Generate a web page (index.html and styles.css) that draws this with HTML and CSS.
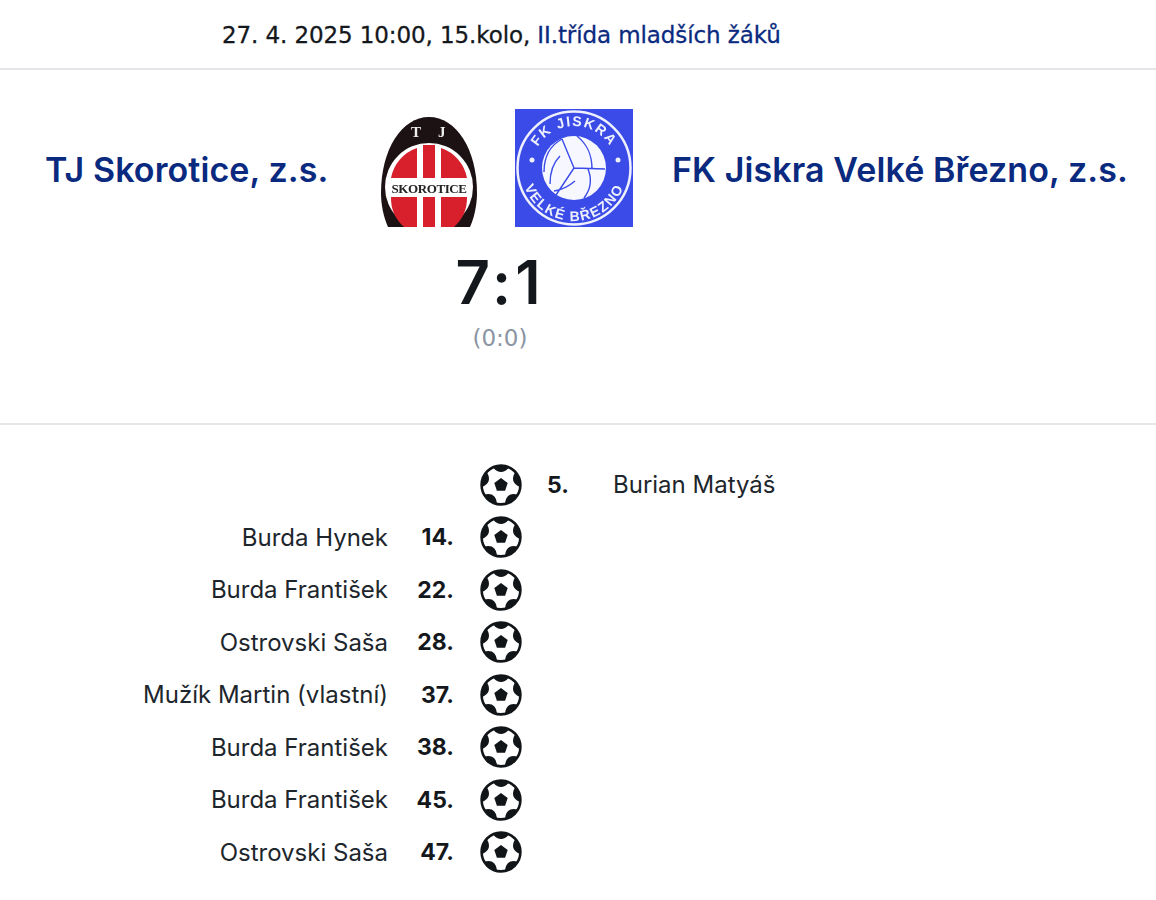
FILE: index.html
```html
<!DOCTYPE html>
<html>
<head>
    <title>TJ Skorotice - FK Jiskra Velké Březno</title>
    <link rel="stylesheet" href="styles.css">
</head>
<body>
    <svg class="defs" width="0" height="0">
        <symbol id="ball" viewBox="0 0 42 42">
            <circle cx="21" cy="21" r="19.400" fill="#fff" stroke="#111518" stroke-width="2.600"/>
            <path d="M13.270 3.640Q21 12.400 28.730 3.640A19 19 0 0 0 13.270 3.640z" fill="#111518"/>
            <path d="M35.120 8.290Q29.180 18.340 39.900 22.990A19 19 0 0 0 35.120 8.290z" fill="#111518"/>
            <path d="M37.450 30.500Q26.050 27.960 24.950 39.580A19 19 0 0 0 37.450 30.500z" fill="#111518"/>
            <path d="M17.050 39.580Q15.950 27.960 4.550 30.500A19 19 0 0 0 17.050 39.580z" fill="#111518"/>
            <path d="M2.100 22.990Q12.820 18.340 6.880 8.290A19 19 0 0 0 2.100 22.990z" fill="#111518"/>
            <path d="M21 14l6.700 4.900-2.600 7.900h-8.200l-2.600-7.900z" fill="#111518"/>
        </symbol>
    </svg>

    <div class="info">
        27. 4. 2025 10:00, 15.kolo, <a href="#">II.třída mladších žáků</a>
    </div>

    <div class="match">
        <div class="teams">
            <a class="team team-home" href="#">TJ Skorotice, z.s.</a>
            <svg class="logo logo-home" viewBox="0 0 98 118">
                <path d="M1 84C1 40 22 8 49 8s48 32 48 76c0 13-3 25-7 34H8C4 109 1 97 1 84z" fill="#1d1213"/>
                <circle cx="49" cy="78" r="44" fill="#fff"/>
                <path d="M11 69a39 39 0 0 1 26-30v30zM61 39a39 39 0 0 1 26 30H61zM11 88h26v30H24a39 39 0 0 1-13-30zM61 88h26a39 39 0 0 1-13 30H61z" fill="#d7202c"/>
                <path d="M43 36h12v33H43zM43 88h12v30H43z" fill="#d7202c"/>
                <text x="49" y="84" class="logo-mid" text-anchor="middle">SKOROTICE</text>
                <text x="31" y="28" class="logo-tj">T</text>
                <text x="58" y="28" class="logo-tj">J</text>
            </svg>
            <svg class="logo logo-away" viewBox="0 0 118 118">
                <rect width="118" height="118" fill="#3a4be8"/>
                <circle cx="59" cy="59" r="56.500" fill="none" stroke="#eef0fd" stroke-width="2.500"/>
                <defs>
                    <path id="arc-top" d="M17 59a42 42 0 0 1 84 0"/>
                    <path id="arc-bottom" d="M6 59a53 53 0 0 0 106 0"/>
                </defs>
                <text class="logo-arc"><textPath href="#arc-top" startOffset="50%" text-anchor="middle">FK JISKRA</textPath></text>
                <text class="logo-arc"><textPath href="#arc-bottom" startOffset="50%" text-anchor="middle">VELKÉ BŘEZNO</textPath></text>
                <circle cx="17" cy="51" r="2.500" fill="#eef0fd"/>
                <circle cx="103" cy="51" r="2.500" fill="#eef0fd"/>
                <circle cx="59" cy="59" r="32" fill="#f7f8ff"/>
                <path d="M59 59L47 30M59 59l31 1M59 59L41 86M47 30c-11 6-18 17-18 33M62 27c11 9 15 19 15 33M45 47c-7 7-10 15-10 28M73 60c4 10 3 20-4 29M60 72c-7 6-13 9-21 10" fill="none" stroke="#3a4be8" stroke-width="1.400"/>
            </svg>
            <a class="team team-away" href="#">FK Jiskra Velké Březno, z.s.</a>
        </div>
        <div class="score">7:1</div>
        <div class="halftime">(0:0)</div>
    </div>

    <div class="goals">
        <div class="goal">
            <span class="player-home"></span><b class="min-home"></b>
            <svg class="ball"><use href="#ball"/></svg>
            <b class="min-away">5.</b><span class="player-away">Burian Matyáš</span>
        </div>
        <div class="goal">
            <span class="player-home">Burda Hynek</span><b class="min-home">14.</b>
            <svg class="ball"><use href="#ball"/></svg>
        </div>
        <div class="goal">
            <span class="player-home">Burda František</span><b class="min-home">22.</b>
            <svg class="ball"><use href="#ball"/></svg>
        </div>
        <div class="goal">
            <span class="player-home">Ostrovski Saša</span><b class="min-home">28.</b>
            <svg class="ball"><use href="#ball"/></svg>
        </div>
        <div class="goal">
            <span class="player-home">Mužík Martin (vlastní)</span><b class="min-home">37.</b>
            <svg class="ball"><use href="#ball"/></svg>
        </div>
        <div class="goal">
            <span class="player-home">Burda František</span><b class="min-home">38.</b>
            <svg class="ball"><use href="#ball"/></svg>
        </div>
        <div class="goal">
            <span class="player-home">Burda František</span><b class="min-home">45.</b>
            <svg class="ball"><use href="#ball"/></svg>
        </div>
        <div class="goal">
            <span class="player-home">Ostrovski Saša</span><b class="min-home">47.</b>
            <svg class="ball"><use href="#ball"/></svg>
        </div>
    </div>
</body>
</html>
```

FILE: styles.css
```css
body {
    font-family: Inter, "Liberation Sans", sans-serif;
    margin: 0;
    color: #14181c;
    background: #fff;
}
a {
    color: #0a2a80;
    text-decoration: none;
}
.defs {
    position: absolute;
}
.info {
    height: 68px;
    line-height: 70px;
    padding-left: 222px;
    font-family: "DejaVu Sans", sans-serif;
    font-size: 23px;
    letter-spacing: -0.1px;
    white-space: nowrap;
    -webkit-text-stroke: 0.3px;
    border-bottom: 2px solid #e4e6ea;
}
.match {
    height: 353px;
    border-bottom: 2px solid #e4e6ea;
}
.teams {
    display: flex;
    align-items: center;
    padding-top: 39px;
    height: 118px;
}
.team {
    margin-top: 2px;
    font-size: 34px;
    font-weight: 600;
    letter-spacing: 0.1px;
    white-space: nowrap;
}
.team-home {
    margin-left: 45px;
    width: 335px;
}
.team-away {
    margin-left: 39px;
}
.logo {
    display: block;
    height: 118px;
    filter: blur(0.6px);
}
.logo-home {
    width: 98px;
}
.logo-away {
    width: 118px;
    margin-left: 37px;
}
.logo-mid {
    font-family: "Liberation Serif", serif;
    font-size: 13px;
    font-weight: bold;
    letter-spacing: -0.4px;
    fill: #222;
}
.logo-tj {
    font-family: "Liberation Serif", serif;
    font-size: 15px;
    font-weight: bold;
    fill: #eee;
}
.logo-arc {
    font-family: "Liberation Sans Narrow", "Liberation Sans", sans-serif;
    font-size: 14px;
    font-weight: 700;
    letter-spacing: 1.5px;
    fill: #eef0fd;
}
.score {
    width: 1000px;
    margin-top: 18px;
    text-align: center;
    font-size: 60px;
    line-height: 74px;
    font-weight: 600;
    letter-spacing: 4px;
}
.halftime {
    width: 1000px;
    margin-top: 4px;
    text-align: center;
    font-family: "DejaVu Sans", sans-serif;
    font-size: 23px;
    line-height: 30px;
    color: #8a94a3;
}
.goals {
    padding-top: 33.500px;
}
.goal {
    display: flex;
    align-items: center;
    height: 52.500px;
    font-size: 24px;
    color: #1d262c;
}
.player-home {
    width: 388px;
    text-align: right;
    white-space: nowrap;
}
.min-home {
    width: 66px;
    text-align: right;
    font-size: 23px;
    font-weight: 700;
    color: #14181c;
}
.ball {
    width: 42px;
    height: 42px;
    margin: 0 25px 0 26px;
}
.min-away {
    width: 66px;
    font-size: 23px;
    font-weight: 700;
    color: #14181c;
}
```
